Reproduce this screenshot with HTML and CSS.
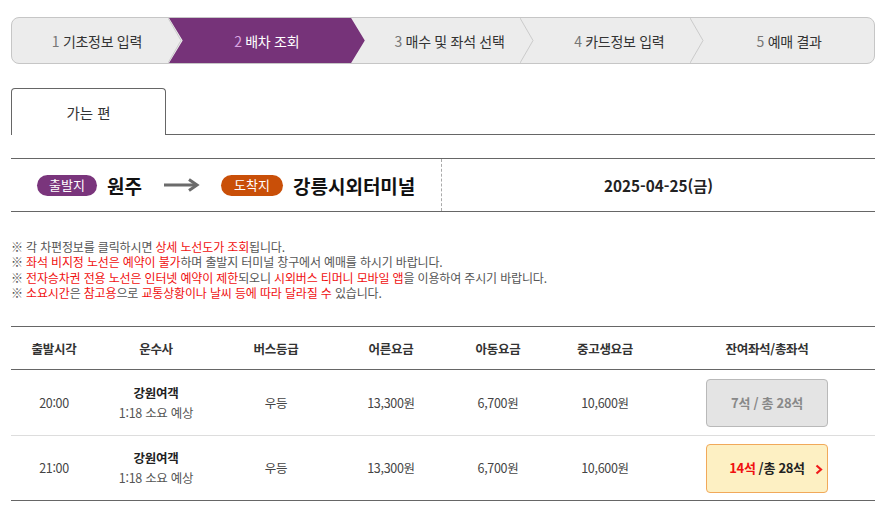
FILE: index.html
```html
<!DOCTYPE html>
<html lang="ko">
<head>
<meta charset="utf-8">
<link rel="stylesheet" href="styles.css">
</head>
<body>
<div class="page">
  <ol class="steps">
    <li class="step"><span class="label"><span class="num">1</span> 기초정보 입력</span>
      <svg class="sep" viewBox="0 0 14 46" preserveAspectRatio="none"><polyline points="0,0 13,23 0,46" fill="none" stroke="#cacaca" stroke-width="1"/></svg>
    </li>
    <li class="step active">
      <svg class="shape" viewBox="0 0 186 46" preserveAspectRatio="none"><polygon points="0,0 173,0 186,23 173,46 0,46 13,23" fill="#763379"/></svg>
      <span class="label"><span class="num">2</span> 배차 조회</span>
    </li>
    <li class="step"><span class="label"><span class="num">3</span> 매수 및 좌석 선택</span>
      <svg class="sep" viewBox="0 0 14 46" preserveAspectRatio="none"><polyline points="0,0 13,23 0,46" fill="none" stroke="#cacaca" stroke-width="1"/></svg>
    </li>
    <li class="step"><span class="label"><span class="num">4</span> 카드정보 입력</span>
      <svg class="sep" viewBox="0 0 14 46" preserveAspectRatio="none"><polyline points="0,0 13,23 0,46" fill="none" stroke="#cacaca" stroke-width="1"/></svg>
    </li>
    <li class="step"><span class="label"><span class="num">5</span> 예매 결과</span></li>
  </ol>

  <div class="tabs">
    <div class="tab">가는 편</div>
  </div>

  <div class="route">
    <div class="route-places">
      <span class="badge badge-dep">출발지</span>
      <strong class="place">원주</strong>
      <svg class="arrow" width="36" height="14" viewBox="0 0 36 14"><path d="M0 7 H33" stroke="#6b6b6b" stroke-width="3"/><path d="M25 1.5 L33 7 L25 12.5" fill="none" stroke="#6b6b6b" stroke-width="3"/></svg>
      <span class="badge badge-arr">도착지</span>
      <strong class="place">강릉시외터미널</strong>
    </div>
    <div class="route-date">2025-04-25(금)</div>
  </div>

  <ul class="notes">
    <li>※ 각 차편정보를 클릭하시면 <em>상세 노선도가 조회</em>됩니다.</li>
    <li>※ <em>좌석 비지정 노선은 예약이 불가</em>하며 출발지 터미널 창구에서 예매를 하시기 바랍니다.</li>
    <li>※ <em>전자승차권 전용 노선은 인터넷 예약이 제한</em>되오니 <em>시외버스 티머니 모바일 앱</em>을 이용하여 주시기 바랍니다.</li>
    <li>※ <em>소요시간</em>은 <em>참고용</em>으로 <em>교통상황이나 날씨 등에 따라 달라질 수</em> 있습니다.</li>
  </ul>

  <table class="buses">
    <colgroup>
      <col class="c-time"><col class="c-comp"><col class="c-grade"><col class="c-fare"><col class="c-fare2"><col class="c-fare3"><col class="c-seat">
    </colgroup>
    <thead>
      <tr><th>출발시각</th><th>운수사</th><th>버스등급</th><th>어른요금</th><th>아동요금</th><th>중고생요금</th><th>잔여좌석/총좌석</th></tr>
    </thead>
    <tbody>
      <tr>
        <td>20:00</td>
        <td><strong class="company">강원여객</strong><span class="dur">1:18 소요 예상</span></td>
        <td>우등</td>
        <td>13,300원</td>
        <td>6,700원</td>
        <td>10,600원</td>
        <td><span class="seat seat-off">7석 / 총 28석</span></td>
      </tr>
      <tr>
        <td>21:00</td>
        <td><strong class="company">강원여객</strong><span class="dur">1:18 소요 예상</span></td>
        <td>우등</td>
        <td>13,300원</td>
        <td>6,700원</td>
        <td>10,600원</td>
        <td><span class="seat seat-on"><em>14석</em> /총 28석<svg class="chev" width="8" height="11" viewBox="0 0 8 11"><path d="M1.5 1.5 L6 5.5 L1.5 9.5" fill="none" stroke="#f01a1a" stroke-width="2.2"/></svg></span></td>
      </tr>
    </tbody>
  </table>
</div>
</body>
</html>
```

FILE: styles.css
```css
* { box-sizing: border-box; }
html, body { margin: 0; padding: 0; background: #fff; }
body {
  font-family: "Noto Sans CJK KR", "Noto Sans", sans-serif;
  color: #333;
}
.page {
  width: 887px;
  padding: 17px 12px 0 11px;
}

/* steps */
.steps {
  list-style: none;
  margin: 0;
  padding: 0;
  display: flex;
  height: 47px;
  border: 1px solid #c6c6c6;
  border-radius: 8px;
  background: #ececec;
  overflow: hidden;
}
.step {
  position: relative;
  flex: 1 1 0;
  display: flex;
  align-items: center;
  justify-content: center;
  font-size: 14px;
  color: #333;
  letter-spacing: -0.3px;
}
.step .label { position: relative; z-index: 3; white-space: nowrap; }
.step .num { color: #777; }
.step .sep {
  position: absolute;
  top: 0;
  right: 0;
  width: 14px;
  height: 100%;
  z-index: 2;
}
.step.active { color: #fff; padding-right: 13px; }
.step.active .num { color: #d9a3e0; }
.step.active .shape {
  position: absolute;
  top: 0;
  left: -13px;
  width: calc(100% + 13px);
  height: 100%;
  z-index: 1;
}

/* tabs */
.tabs {
  margin-top: 24px;
  display: flex;
  border-bottom: 1px solid #666;
}
.tab {
  width: 155px;
  height: 47px;
  margin-bottom: -1px;
  border: 1px solid #666;
  border-bottom: none;
  border-radius: 4px 4px 0 0;
  background: #fff;
  display: flex;
  align-items: center;
  justify-content: center;
  font-size: 14.5px;
  color: #333;
}

/* route */
.route {
  margin-top: 23px;
  display: flex;
  height: 54px;
  border-top: 1px solid #666;
  border-bottom: 1px solid #666;
}
.route-places {
  width: 431px;
  border-right: 1px dashed #aaa;
  display: flex;
  align-items: center;
  padding-left: 26px;
}
.badge {
  display: inline-flex;
  align-items: center;
  justify-content: center;
  height: 21px;
  border-radius: 11px;
  color: #fff;
  font-size: 13px;
  padding-bottom: 1px;
}
.badge-dep { width: 60px; background: #7a357c; }
.badge-arr { width: 62px; background: #c94f08; }
.place {
  font-size: 19px;
  font-weight: 700;
  color: #111;
  margin-left: 10px;
}
.arrow { margin: 0 21px 0 22px; }
.route-date {
  flex: 1;
  display: flex;
  align-items: center;
  justify-content: center;
  font-size: 15.3px;
  font-weight: 700;
  color: #222;
}

/* notes */
.notes {
  list-style: none;
  margin: 27px 0 0;
  padding: 0;
  font-size: 12px;
  line-height: 15.3px;
  color: #555;
  letter-spacing: -0.15px;
}
.notes em { font-style: normal; color: #f01010; }

/* table */
.buses {
  margin-top: 26px;
  width: 864px;
  border-collapse: collapse;
  table-layout: fixed;
  border-top: 1px solid #666;
  border-bottom: 1px solid #666;
  font-size: 12.5px;
}
.c-time { width: 86px; }
.c-comp { width: 118px; }
.c-grade { width: 122px; }
.c-fare { width: 108px; }
.c-fare2 { width: 106px; }
.c-fare3 { width: 108px; }
.c-seat { width: 216px; }
.buses th {
  height: 43px;
  font-weight: 700;
  color: #333;
  border-bottom: 1px solid #666;
  letter-spacing: -0.3px;
}
.buses td {
  height: 66px;
  text-align: center;
  color: #444;
  border-bottom: 1px solid #ddd;
  letter-spacing: -0.3px;
  line-height: 20px;
}
.buses tbody tr:last-child td { border-bottom: none; height: 65px; }
.company { display: block; font-weight: 700; color: #222; }
.dur { display: block; color: #555; }
.seat {
  position: relative;
  display: inline-flex;
  align-items: center;
  justify-content: center;
  width: 122px;
  height: 48px;
  border-radius: 4px;
  font-weight: 700;
  font-size: 13px;
}
.seat-off { background: #e4e4e4; border: 1px solid #b9b9b9; color: #888; }
.seat-on { background: #fdf0c3; border: 1px solid #f1a95a; color: #222; height: 49px; }
.seat-on em { font-style: normal; color: #f01010; margin-right: 3px; }
.chev {
  position: absolute;
  right: 4px;
  top: 19px;
}
```
